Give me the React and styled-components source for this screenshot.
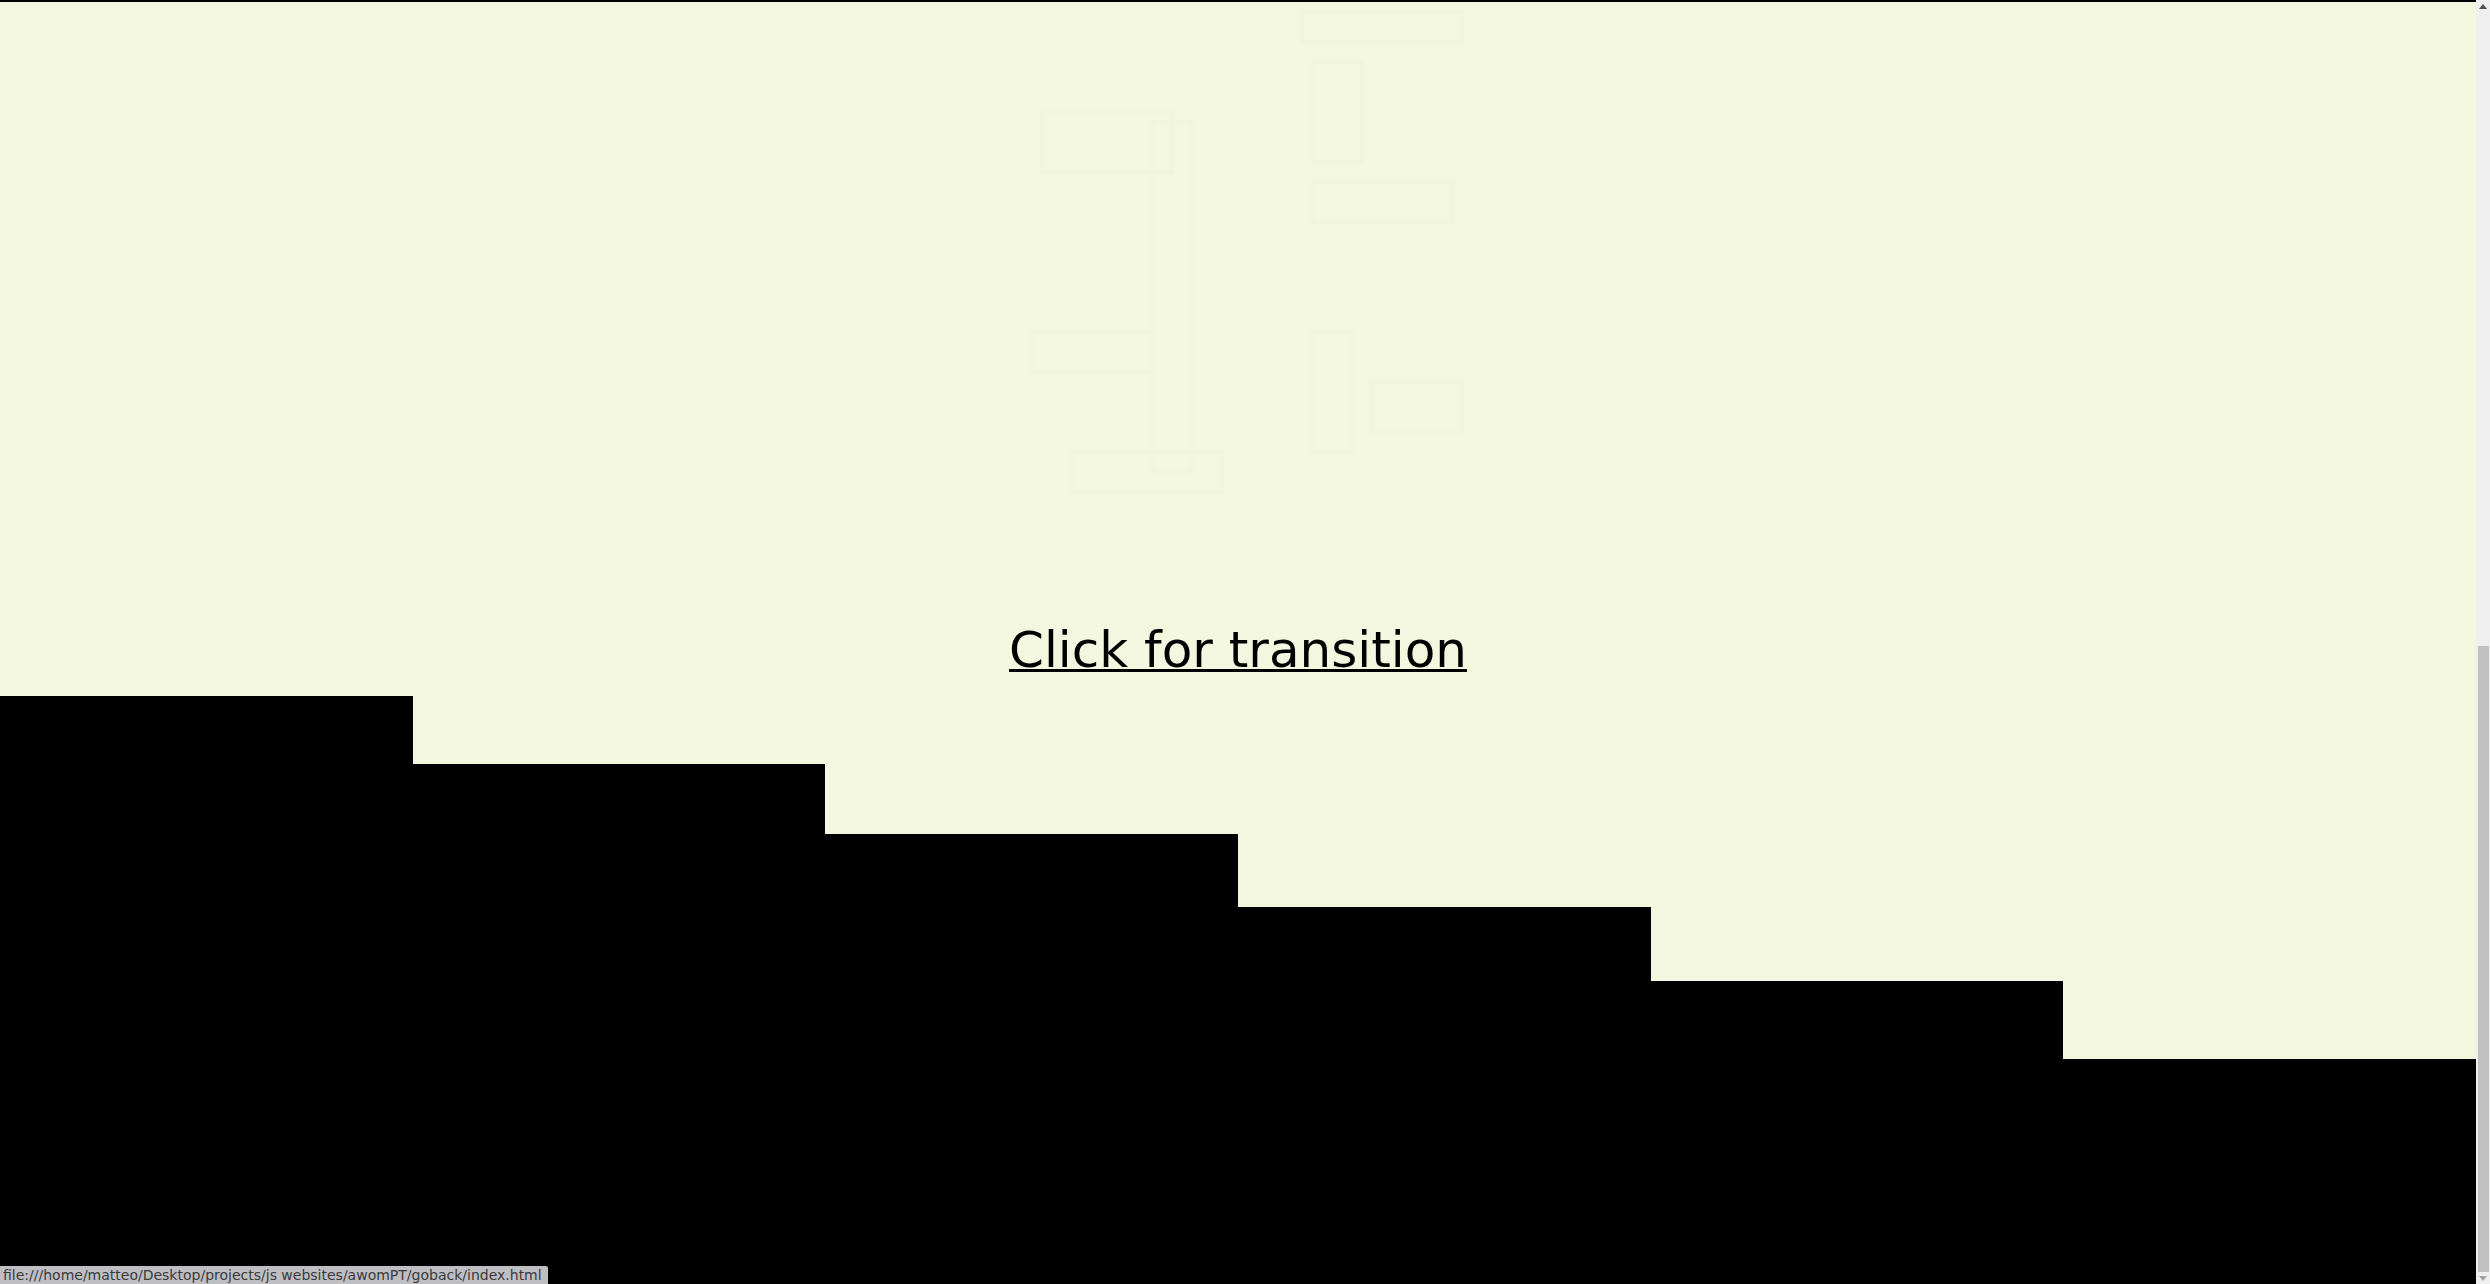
import React from "react";
import styled, { createGlobalStyle } from "styled-components";

const GlobalStyle = createGlobalStyle`
  html, body {
    margin: 0;
    padding: 0;
    height: 100%;
    overflow: hidden;
  }
  body {
    font-family: "DejaVu Sans", sans-serif;
    background: #f3f7df;
  }
`;

const Page = styled.div`
  display: flex;
  width: 100vw;
  height: 100vh;
`;

const Main = styled.div`
  flex: 1;
  display: flex;
  flex-direction: column;
  background: #f3f7df;
  border-top: 2px solid #000;
  min-width: 0;
`;

const Hero = styled.div`
  flex: 1;
  position: relative;
  display: flex;
  flex-direction: column;
  align-items: center;
  justify-content: flex-end;
  padding-bottom: 17px;
`;

// barely visible picture behind the link
const Ghost = styled.svg`
  position: absolute;
  top: 0;
  left: 50%;
  transform: translateX(-47%);
  width: 480px;
  height: 500px;
`;

const Link = styled.a`
  position: relative;
  font-family: "DejaVu Sans", "Verdana", sans-serif;
  font-size: 50px;
  line-height: 58px;
  color: #000;
  text-decoration: underline;
  text-decoration-thickness: 3px;
  cursor: pointer;
`;

const Stairs = styled.div`
  display: grid;
  grid-template-columns: repeat(6, 1fr);
  align-items: end;
  height: 588px;
`;

const Step = styled.div`
  background: #010101;
  height: ${(props) => props.h}px;
`;

const Scrollbar = styled.div`
  width: 14px;
  display: flex;
  flex-direction: column;
  background: #efefef;
`;

const ScrollButton = styled.div`
  height: 12px;
  display: flex;
  align-items: center;
  justify-content: center;
`;

const Track = styled.div`
  flex: 1;
  display: flex;
  flex-direction: column;
  justify-content: flex-end;
  padding: 0 1px 0 2px;
`;

const Thumb = styled.div`
  height: 626px;
  background: #c1c1c1;
`;

const StatusBar = styled.div`
  position: fixed;
  left: 0;
  bottom: 0;
  height: 18px;
  padding: 0 6px 0 3px;
  background: #bebec3;
  border-top-right-radius: 2px;
  color: #3a3a3a;
  font-family: "DejaVu Sans", sans-serif;
  font-size: 14px;
  line-height: 18px;
  overflow: hidden;
  white-space: nowrap;
`;

const steps = [588, 520, 450, 377, 303, 225];

const ghostBlocks = [
  [30, 110, 130, 60],
  [20, 330, 120, 40],
  [140, 120, 40, 350],
  [290, 10, 160, 30],
  [300, 60, 50, 100],
  [300, 180, 140, 40],
  [300, 330, 40, 120],
  [360, 380, 90, 50],
  [60, 450, 150, 40],
];

const App = () => {
  return (
    <>
      <GlobalStyle />
      <Page>
        <Main>
          <Hero>
            <Ghost viewBox="0 0 480 500">
              {ghostBlocks.map(([x, y, w, h], i) => (
                <rect
                  key={i}
                  x={x}
                  y={y}
                  width={w}
                  height={h}
                  fill="none"
                  stroke="#f1f5dc"
                  strokeWidth="5"
                />
              ))}
            </Ghost>
            <Link>Click for transition</Link>
          </Hero>
          <Stairs>
            {steps.map((h, i) => (
              <Step key={i} h={h} />
            ))}
          </Stairs>
        </Main>
        <Scrollbar>
          <ScrollButton>
            <svg width="8" height="5" viewBox="0 0 8 5">
              <path d="M0 5 L4 0 L8 5 Z" fill="#505050" />
            </svg>
          </ScrollButton>
          <Track>
            <Thumb />
          </Track>
          <ScrollButton>
            <svg width="8" height="5" viewBox="0 0 8 5">
              <path d="M0 0 L8 0 L4 5 Z" fill="#a3a3a3" />
            </svg>
          </ScrollButton>
        </Scrollbar>
      </Page>
      <StatusBar>
        file:///home/matteo/Desktop/projects/js websites/awomPT/goback/index.html
      </StatusBar>
    </>
  );
};

export default App;
